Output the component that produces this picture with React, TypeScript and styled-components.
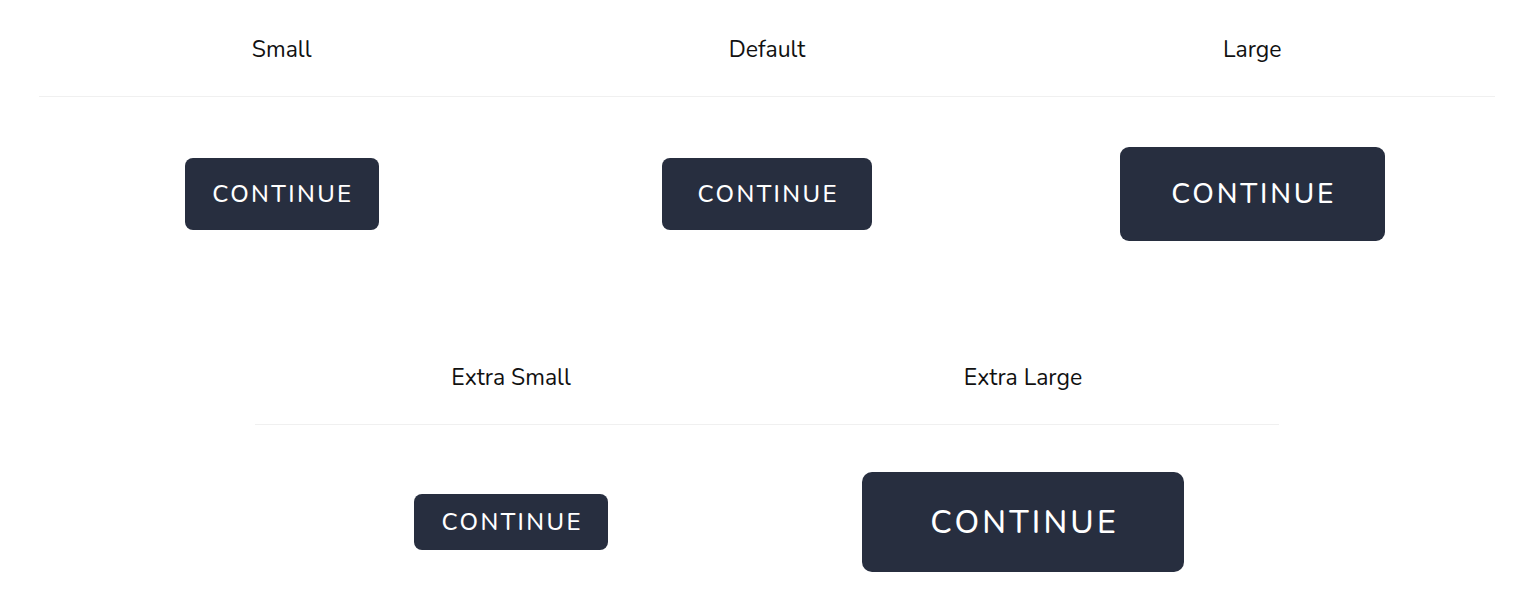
import React from "react";
import styled, { createGlobalStyle } from "styled-components";

const GlobalStyle = createGlobalStyle`
  html, body {
    margin: 0;
    padding: 0;
    background: #ffffff;
    font-family: "Nunito", "Lato", "Noto Sans", sans-serif;
  }
`;

const Page = styled.div`
  display: flex;
  flex-direction: column;
  gap: 37px;
  padding-left: 39px;
  width: 1456px;
`;

const Table = styled.div<{ width: number; offset: number }>`
  width: ${props => props.width}px;
  margin-left: ${props => props.offset}px;
`;

const HeadRow = styled.div<{ cols: number }>`
  display: grid;
  grid-template-columns: repeat(${props => props.cols}, 1fr);
  height: 96px;
  border-bottom: 1px solid #f0f0f0;
`;

const HeadCell = styled.div`
  display: flex;
  align-items: center;
  justify-content: center;
  padding-top: 3px;
  font-size: 23px;
  color: #111;
`;

const BodyRow = styled.div<{ cols: number }>`
  display: grid;
  grid-template-columns: repeat(${props => props.cols}, 1fr);
  height: 194px;
`;

const BodyCell = styled.div`
  display: flex;
  align-items: center;
  justify-content: center;
`;

type Size = "xs" | "sm" | "md" | "lg" | "xl";

const sizes: Record<Size, { w: number; h: number; fs: number; r: number }> = {
  xs: { w: 194, h: 56, fs: 24, r: 8 },
  sm: { w: 194, h: 72, fs: 24, r: 8 },
  md: { w: 210, h: 72, fs: 24, r: 8 },
  lg: { w: 265, h: 94, fs: 28, r: 9 },
  xl: { w: 322, h: 100, fs: 32, r: 10 },
};

const Button = styled.button<{ size: Size }>`
  width: ${props => sizes[props.size].w}px;
  height: ${props => sizes[props.size].h}px;
  border: none;
  border-radius: ${props => sizes[props.size].r}px;
  background: #272e3f;
  color: #ffffff;
  font-family: "Nunito", "Lato", "Noto Sans", sans-serif;
  font-size: ${props => sizes[props.size].fs}px;
  font-weight: 500;
  letter-spacing: 0.1em;
  text-indent: 0.1em;
  padding: 0;
  display: flex;
  align-items: center;
  justify-content: center;
  cursor: pointer;
`;

const topRow: { label: string; size: Size }[] = [
  { label: "Small", size: "sm" },
  { label: "Default", size: "md" },
  { label: "Large", size: "lg" },
];

const bottomRow: { label: string; size: Size }[] = [
  { label: "Extra Small", size: "xs" },
  { label: "Extra Large", size: "xl" },
];

const SizeTable: React.FC<{
  items: { label: string; size: Size }[];
  width: number;
  offset: number;
}> = ({ items, width, offset }) => (
  <Table width={width} offset={offset}>
    <HeadRow cols={items.length}>
      {items.map(item => (
        <HeadCell key={item.label}>{item.label}</HeadCell>
      ))}
    </HeadRow>
    <BodyRow cols={items.length}>
      {items.map(item => (
        <BodyCell key={item.label}>
          <Button size={item.size}>CONTINUE</Button>
        </BodyCell>
      ))}
    </BodyRow>
  </Table>
);

const App: React.FC = () => {
  return (
    <>
      <GlobalStyle />
      <Page>
        <SizeTable items={topRow} width={1456} offset={0} />
        <SizeTable items={bottomRow} width={1024} offset={216} />
      </Page>
    </>
  );
};

export default App;
